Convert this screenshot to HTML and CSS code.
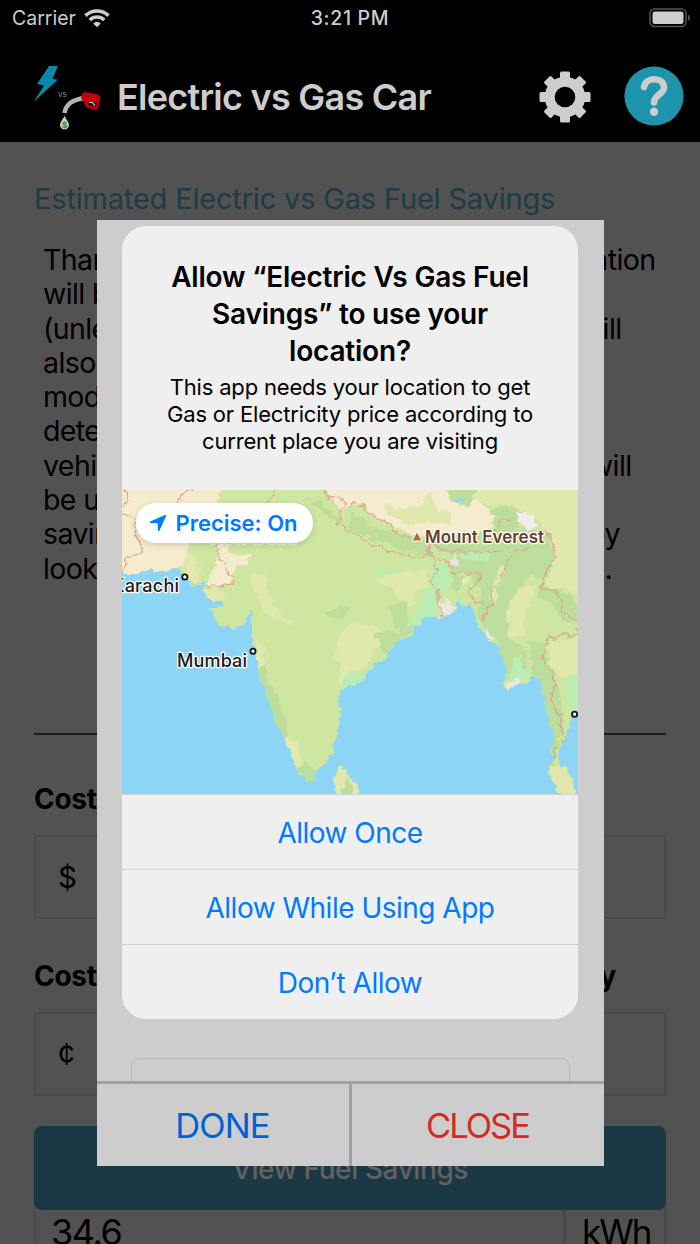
FILE: index.html
```
<!DOCTYPE html>
<html lang="en">
<head>
  <meta charset="utf-8">
  <title>Electric vs Gas Car</title>
  <link rel="stylesheet" href="styles.css">
</head>
<body>
  <div class="screen">
    <header class="header">
      <div class="status">
        <div class="status-left">
          <span class="carrier">Carrier</span>
          <svg class="wifi" width="26" height="19" viewBox="0 0 26 19">
            <path d="M1.500 6.600 A16.500 16.500 0 0 1 24.500 6.600" />
            <path d="M5.700 11 A10.500 10.500 0 0 1 20.300 11" />
            <path class="wifi-dot" d="M9.200 14.400 Q13 11 16.800 14.400 L13 18.200 Z" />
          </svg>
        </div>
        <span class="time">3:21 PM</span>
        <svg class="battery" width="42" height="20" viewBox="0 0 42 20">
          <rect class="battery-case" x="1" y="1" width="36" height="17.5" rx="4.5" />
          <rect class="battery-level" x="3.5" y="3.5" width="31" height="12.5" rx="2.5" />
          <path class="battery-tip" d="M39 6.5 Q41 7.5 41 9.8 Q41 12 39 13 Z" />
        </svg>
      </div>
      <div class="nav">
        <svg class="logo" width="70" height="68" viewBox="32 64 70 68">
          <path fill="#0a87ab" d="M49 66 L58 66 L52.5 79 L58 79.5 L33.500 102 L44 85.500 L37 84 Z" />
          <text class="logo-vs" x="58" y="97">vs</text>
          <path fill="none" stroke="#b4b4b4" stroke-width="4.500" d="M64.500 113 C66 104 72 100.500 83 98" />
          <path fill="#c60006" d="M83 92.500 Q87 91.500 99 95 Q100.500 96 100 99 L98.500 108 Q97 110 94 109.500 L86 107 Q84.500 102 81 98 Z" />
          <path fill="#111" d="M89 100.500 L97 103 L96 107 L88 105 Z" />
          <path fill="none" stroke="#c8c8c8" stroke-width="1.200" d="M89 102.500 L92 102.200 L95 105.500" />
          <path fill="#bfc9bd" d="M64.500 115.500 C65.500 119 69 121.500 69 125 A4.500 4.500 0 0 1 60 125 C60 121.500 63.500 119 64.500 115.500 Z" />
          <text class="logo-dollar" x="64.500" y="127.500">$</text>
        </svg>
        <h1 class="nav-title">Electric vs Gas Car</h1>
        <svg class="gear" width="52" height="52" viewBox="-26 -26 52 52">
          <g fill="#cdcdcd">
            <circle r="20.3" />
            <rect x="-5" y="-25.500" width="10" height="51" rx="1.500" />
            <rect x="-5" y="-25.500" width="10" height="51" rx="1.500" transform="rotate(45)" />
            <rect x="-5" y="-25.500" width="10" height="51" rx="1.500" transform="rotate(90)" />
            <rect x="-5" y="-25.500" width="10" height="51" rx="1.500" transform="rotate(135)" />
          </g>
          <circle r="10.3" fill="#000" />
        </svg>
        <svg class="help" width="60" height="60" viewBox="-30 -30 60 60">
          <circle r="29.600" fill="#1e93ac" />
          <path fill="none" stroke="#cdcdcd" stroke-width="6.500" stroke-linecap="round" d="M-10 -9 C-8.500 -19.500 10 -19.500 10 -8.500 C10 -2 0 -1 0 6.500" />
          <circle cx="0" cy="15.800" r="4.200" fill="#cdcdcd" />
        </svg>
      </div>
    </header>

    <main class="main">
      <h2 class="heading">Estimated Electric vs Gas Fuel Savings</h2>
      <div class="intro">
        <div class="line end-655"><span>Thank</span><span>location</span></div>
        <div class="line"><span>will be</span></div>
        <div class="line end-621"><span>(unless</span><span>will</span></div>
        <div class="line"><span>also</span></div>
        <div class="line"><span>model</span></div>
        <div class="line"><span>deter</span></div>
        <div class="line end-631"><span>vehicle</span><span>will</span></div>
        <div class="line"><span>be used</span></div>
        <div class="line end-620"><span>savings</span><span>by</span></div>
        <div class="line end-611"><span>look</span><span>.</span></div>
      </div>
      <hr class="rule">
      <div class="label">Cost of Gas</div>
      <div class="box">$</div>
      <div class="label label-split"><span>Cost of</span><span>Electricity</span></div>
      <div class="box">¢</div>
      <div class="view-button">View Fuel Savings</div>
      <div class="battery-row">
        <div class="battery-value">34.6</div>
        <div class="battery-unit">kWh</div>
      </div>
    </main>

    <div class="modal">
      <div class="alert">
        <div class="alert-text">
          <div class="alert-title">Allow “Electric Vs Gas Fuel<br>Savings” to use your<br>location?</div>
          <div class="alert-message">This app needs your location to get<br>Gas or Electricity price according to<br>current place you are visiting</div>
        </div>
        <div class="map">
          <svg class="map-art" width="456" height="304" viewBox="122 490 456 304">
            <defs>
              <filter id="rough" filterUnits="userSpaceOnUse" x="112" y="480" width="476" height="324">
                <feTurbulence type="fractalNoise" baseFrequency="0.13" numOctaves="3" seed="4" />
                <feDisplacementMap in="SourceGraphic" scale="9" xChannelSelector="R" yChannelSelector="G" />
              </filter>
            </defs>
            <rect x="122" y="490" width="456" height="304" fill="#8cd5f6" />
            <g filter="url(#rough)">
              <path fill="#cfe6a1" d="M112 480 H588 V714 L570 716 L569 728 L564 740 L558 757 L560 766 L565 767 L570 771 L573 783 L580 804 H568 L563 792 L556 782 L549 774 L552 755 L554 738 L553 724 L546 710 L544 696 L541 681 L533 673 L527 682 L518 686 L509 690 L503 684 L506 670 L504 658 L497 645 L487 636 L479 628 L475 616 L470 606 L462 603 L459 598 L456 612 L450 614 L440 618 L433 616 L422 619 L416 624 L410 636 L397 641 L384 659 L375 666 L364 675 L362 682 L350 686 L342 690 L338 700 L340 722 L334 740 L335 755 L328 756 L325 766 L315 771 L314 778 L307 781 L302 777 L295 768 L291 752 L284 737 L276 724 L272 710 L265 692 L259 678 L257 660 L252 640 L252 624 L251 611 L249 610 L246 622 L240 627 L230 629 L222 626 L214 618 L209 609 L216 608 L224 604 L222 601 L215 602 L206 596 L203 590 L204 583 L196 586 L190 584 L185 574 L178 568 L162 571 L152 569 L150 571 L128 573 L112 576 Z" />
              <!-- dry plains and the plateau -->
              <path fill="#f5ecd0" d="M112 480 H224 L216 505 L200 520 L188 540 L186 560 L178 568 L162 571 L152 569 L150 571 L128 573 L112 576 Z" />
              <path fill="#f5ecd0" d="M214 543 L226 545 L230 552 L243 556 L250 556 L248 562 L238 566 L233 572 L232 583 L220 586 L205 585 L214 570 L218 556 Z" />
              <path fill="#f5ecd0" d="M318 480 H450 L480 502 L494 512 L492 530 L476 532 L430 536 L410 534 L384 523 L366 508 L352 504 L344 510 L334 503 Z" />
              <!-- scrub -->
              <path fill="#e0e8ad" d="M450 480 H588 V608 L566 588 L552 590 L544 584 L552 570 L553 545 L545 530 L540 520 L525 514 L515 507 L490 505 L475 500 L462 506 Z" />
              <path fill="#e0e8ad" d="M384 506 L400 508 L420 506 L430 492 L436 500 L436 508 L450 514 L449 524 L426 523 L412 526 L400 520 L388 516 Z" />
              <path fill="#e0e8ad" d="M183 568 L189 548 L192 555 L201 566 L198 584 L192 584 Z M203 590 L216 587 L226 596 L230 599 L220 600 L215 602 L206 596 Z M252 574 L265 572 L268 590 L274 606 L282 618 L296 620 L290 624 L274 618 L263 612 L258 596 L251 582 Z" />
              <path fill="#e0e8ad" d="M255 642 L266 646 L263 656 L268 668 L262 672 L258 670 Z M340 632 L352 622 L372 626 L384 640 L374 652 L364 668 L350 672 L340 688 L340 668 L334 654 Z M378 570 L400 572 L426 570 L428 584 L416 592 L414 604 L402 610 L396 588 L380 584 Z M350 628 L380 626 L384 636 L366 640 Z M284 737 L297 740 L302 762 L295 768 L291 752 Z" />
              <!-- forest -->
              <path fill="#bcdd9c" d="M306 498 L320 502 L346 524 L346 526 L330 518 Z M350 512 L366 520 L372 528 L400 534 L430 540 L432 556 L408 552 L386 544 L360 534 L348 530 Z M326 612 L342 606 L350 608 L344 618 L328 618 Z" />
              <path fill="#bcdd9c" d="M432 536 L490 530 L505 525 L536 532 L548 532 L553 550 L552 568 L544 582 L530 574 L520 590 L510 600 L506 616 L510 650 L500 644 L484 630 L476 610 L480 590 L468 574 L452 572 L450 552 L436 552 Z" />
              <path fill="#bcdd9c" d="M492 512 L504 505 L524 512 L522 524 L508 528 L494 526 Z M450 572 L466 578 L460 590 L453 590 Z" />
              <path fill="#bcdd9c" d="M258 670 L264 664 L268 682 L278 696 L280 712 L288 718 L288 736 L284 737 L276 724 L272 710 L265 692 L259 678 Z M300 766 L306 762 L315 771 L314 778 L307 781 L296 768 Z" />
              <path fill="#bcdd9c" d="M374 634 L392 632 L406 634 L396 642 L384 656 L380 646 Z M388 606 L402 600 L408 604 L406 622 L416 624 L408 636 L396 628 Z M540 586 L566 592 L588 616 V628 L562 620 L552 602 L538 600 Z" />
              <path fill="#bcdd9c" d="M497 645 L514 640 L528 650 L524 680 L508 686 L506 670 Z M528 640 L544 642 L550 668 L560 690 L562 712 L564 728 L556 752 L554 770 L551 770 L554 738 L546 710 L544 696 L541 681 L532 672 Z" />
              <path fill="#e0e8ad" d="M500 566 L506 568 L498 590 L494 606 L489 600 L494 580 Z M513 600 L520 590 L536 584 L532 602 L524 616 L526 636 L510 636 L506 616 Z M548 642 L588 636 V672 L562 678 L550 662 Z M552 764 L566 768 L572 784 L580 804 H568 L550 778 Z" />
              <!-- river deltas -->
              <path fill="#b9edb4" d="M432 566 L448 562 L450 586 L446 594 L436 584 L430 578 Z M426 586 L438 584 L440 606 L436 616 L424 618 L416 626 L406 628 L420 608 Z M372 572 L396 568 L398 572 L380 578 Z M458 554 L476 551 L490 554 L488 562 L460 558 Z" />
              <path fill="#b9edb4" d="M350 674 L362 672 L364 678 L354 686 L342 688 L344 678 Z M514 656 L520 654 L522 668 L530 668 L524 680 L510 684 L508 678 Z M566 676 L588 672 V716 L570 716 L568 690 Z" />
              <path fill="#eee6dc" d="M454 554 L460 562 L450 564 Z M440 604 L446 598 L456 610 L450 614 L440 616 Z M506 684 L516 678 L522 682 L509 690 Z M464 580 L469 576 L464 588 Z M483 626 L494 638 L490 640 Z" />
              <path fill="#f3eeee" d="M516 512 L534 516 L537 528 L526 530 L518 520 Z" />
              <path fill="#bcdd9c" d="M446 488 H480 L472 496 L470 508 L452 500 Z" />
              <path fill="#8cd5f6" d="M455 500 L465 497 L462 501 L456 502 Z" />
              <!-- Sri Lanka -->
              <path fill="#e0e8ad" d="M335 804 L334 778 L338 766 L343 765 L350 775 L356 782 L359 804 Z" />
              <path fill="#bcdd9c" d="M337 804 L346 782 L349 776 L352 784 L350 804 Z" />
              <!-- country borders -->
              <g class="borders">
                <path d="M124 488 L127 500 L122 506 L122 514 L134 517 L136 534 L142 548 L140 554 L128 556 L124 568 L122 574" />
                <path d="M194 488 L180 496 L176 508" />
                <path d="M275 488 L270 500 L262 510 M218 540 L216 550 L222 560 L226 568 L232 576 L232 584 L218 586 L206 586" />
                <path d="M321 488 L330 498 L338 497 L345 504 L340 516 L338 524 L346 530 L362 538 L376 545 L390 551 L408 556 L430 556 L430 542" />
                <path d="M350 508 L354 503 L364 508 L376 518 L384 520 L392 529 L404 535 L412 538 M430 542 L440 548 L452 552 L480 552 L500 550" />
                <path d="M430 556 L442 560 L450 562 L452 572 L470 574 L482 574 L478 582 L468 590 L474 600 L482 602 L484 622 L488 610 L492 604 L492 590 L500 580 L506 564 L514 552 L530 548" />
                <path d="M432 560 L438 570 L430 580 L438 590 L438 600 L442 616" />
                <path d="M494 530 L502 520 L512 519 M538 528 L548 534 L554 544 L554 560 L546 572 L542 588 L554 590 L562 600 L562 612 L578 620" />
                <path d="M578 630 L570 638 L560 634 L546 642 L542 658 L552 672 L556 684 L550 698 L560 714 L560 724 L565 738 L556 750 L552 762" />
              </g>
            </g>
            <circle class="city-dot" cx="184.800" cy="577" r="2.600" />
            <circle class="city-dot" cx="253" cy="651.300" r="2.600" />
            <circle class="city-dot" cx="574.600" cy="714.300" r="2.600" />
            <path fill="#b86a3c" stroke="#fff" stroke-width="1" d="M417 531.500 L422 541 H412 Z" />
            <text class="city faint" x="210" y="544">New Delhi</text>
            <text class="city" x="112" y="592" textLength="67">Karachi</text>
            <text class="city" x="177" y="666.500" textLength="70">Mumbai</text>
            <text class="peak" x="425" y="542.500" textLength="119">Mount Everest</text>
          </svg>
          <div class="precise">
            <svg width="18" height="18" viewBox="0 0 18 18">
              <path fill="#007aff" d="M16 1 Q17.600 0.500 17 2.200 L10.500 16.600 Q9.300 18 8.900 16.300 L8.800 9.700 Q8.800 9.200 8.300 9.200 L1.500 9.100 Q0 8.600 1.300 7.500 Z" />
            </svg>
            <span>Precise: On</span>
          </div>
        </div>
        <div class="alert-action">Allow Once</div>
        <div class="alert-action">Allow While Using App</div>
        <div class="alert-action">Don’t Allow</div>
      </div>
      <div class="modal-field"></div>
      <div class="modal-footer">
        <div class="done">DONE</div>
        <div class="close">CLOSE</div>
      </div>
    </div>
  </div>
</body>
</html>
```

FILE: styles.css
```
* {
  box-sizing: border-box;
}

body {
  margin: 0;
  font-family: Inter, "Liberation Sans", sans-serif;
  background-color: #525252;
}

.screen {
  position: relative;
  width: 700px;
  height: 1244px;
  overflow: hidden;
  color: #000;
}

.header {
  height: 142px;
  background-color: #000;
  color: #cdcdcd;
}

.status {
  display: grid;
  grid-template-columns: 1fr auto 1fr;
  align-items: center;
  height: 36px;
  padding: 0 9px 0 12px;
  font-size: 19.5px;
}

.status-left {
  display: flex;
  align-items: center;
  gap: 8px;
}

.wifi {
  fill: none;
  stroke: #cdcdcd;
  stroke-width: 3.6;
}

.wifi-dot {
  fill: #cdcdcd;
  stroke: none;
}

.time {
  margin-right: 3px;
  font-weight: 500;
  letter-spacing: 0.7px;
}

.battery {
  justify-self: end;
}

.battery-case {
  fill: none;
  stroke: #555;
  stroke-width: 1.5;
}

.battery-level {
  fill: #cdcdcd;
}

.battery-tip {
  fill: #555;
}

.nav {
  display: flex;
  align-items: center;
  height: 106px;
  padding: 0 16.5px 0 32px;
}

.logo {
  margin-top: 18px;
}

.logo-vs {
  font-size: 8px;
  fill: #8a8a8a;
}

.logo-dollar {
  font-size: 8px;
  font-weight: 700;
  fill: #2f8a3a;
  text-anchor: middle;
}

.nav-title {
  flex: 1;
  margin: 16px 0 0 15px;
  font-size: 36px;
  font-weight: 600;
  letter-spacing: -0.75px;
  white-space: nowrap;
}

.gear {
  margin: 15px 33px 0 0;
}

.help {
  margin-top: 13px;
}

.main {
  padding: 37px 34px 0;
}

.heading {
  margin: 0;
  font-size: 29px;
  font-weight: 400;
  line-height: 40px;
  letter-spacing: -0.18px;
  color: #1c3c47;
  white-space: nowrap;
}

.intro {
  margin: 24px 0 0 9px;
  font-size: 28.5px;
  line-height: 34.3px;
  letter-spacing: -0.6px;
}

.line {
  display: flex;
  justify-content: space-between;
  height: 34.3px;
}

.end-655 {
  width: 612.5px;
}

.end-621 {
  width: 578.5px;
}

.end-631 {
  width: 588.5px;
}

.end-620 {
  width: 577px;
}

.end-611 {
  width: 569px;
}

.rule {
  height: 2px;
  margin: 147px 0 0;
  border: none;
  background-color: #1c1c1c;
}

.label {
  margin-top: 44px;
  font-size: 28px;
  font-weight: 700;
  line-height: 40px;
  letter-spacing: -0.3px;
}

.label-split {
  display: flex;
  justify-content: space-between;
  width: 582px;
  margin-top: 37px;
}

.box {
  height: 84px;
  margin-top: 16px;
  padding-left: 22px;
  border: 2px solid #4a4a4a;
  font-size: 29.5px;
  line-height: 81px;
}

.view-button {
  position: relative;
  height: 84px;
  margin-top: 30px;
  border-radius: 8px;
  background-color: #1b3944;
  color: #626262;
  font-size: 28px;
  font-weight: 500;
  line-height: 86px;
  letter-spacing: -0.4px;
  text-align: center;
}

.battery-row {
  display: flex;
  height: 48px;
  margin-top: -10px;
  border: solid #4a4a4a;
  border-width: 0 2px;
  font-size: 36px;
  line-height: 65px;
}

.battery-value {
  flex: 1;
  padding-left: 15px;
  letter-spacing: -1.4px;
}

.battery-unit {
  width: 101px;
  padding-left: 16px;
  border-left: 3px solid #4a4a4a;
  font-size: 35px;
  letter-spacing: -2px;
}

.modal {
  position: absolute;
  top: 220px;
  left: 96.5px;
  display: flex;
  flex-direction: column;
  width: 507px;
  height: 946px;
  padding-top: 6px;
  background-color: #cdcdcd;
}

.alert {
  width: 456px;
  height: 793px;
  margin: 0 auto;
  overflow: hidden;
  border-radius: 24px;
  background-color: #efefef;
}

.alert-text {
  height: 264px;
  padding-top: 33px;
  text-align: center;
  white-space: nowrap;
}

.alert-title {
  font-size: 28px;
  font-weight: 600;
  line-height: 37px;
  letter-spacing: -0.2px;
}

.alert-message {
  margin-top: 4px;
  font-size: 22px;
  line-height: 27px;
  letter-spacing: -0.18px;
}

.map {
  position: relative;
  height: 304px;
}

.map-art {
  display: block;
}

.borders {
  fill: none;
  stroke: #dfa088;
  stroke-width: 1.2;
  stroke-linejoin: round;
}

.city-dot {
  fill: #fff;
  stroke: #111;
  stroke-width: 1.8;
}

.city,
.peak {
  font-size: 18px;
  font-weight: 500;
  fill: #1b1b1b;
  stroke: #fff;
  stroke-width: 2.5px;
  stroke-linejoin: round;
  paint-order: stroke;
}

.peak {
  font-size: 17px;
  font-weight: 600;
  fill: #65401f;
}

.faint {
  fill: #c9cdb8;
  opacity: 0.5;
}

.precise {
  position: absolute;
  top: 13px;
  left: 13.5px;
  display: flex;
  align-items: center;
  gap: 9px;
  width: 177px;
  height: 40px;
  padding-left: 13px;
  border-radius: 20px;
  background-color: #fff;
  box-shadow: 0 2px 6px rgba(0, 0, 0, 0.15);
  color: #007aff;
  font-size: 22px;
  font-weight: 600;
}

.alert-action {
  height: 75px;
  border-top: 1.5px solid #d2d2d2;
  color: #007aff;
  font-size: 28px;
  line-height: 76px;
  letter-spacing: -0.5px;
  text-align: center;
}

.modal-field {
  height: 23px;
  margin: 39px 33.5px 0 34px;
  border: 1px solid #b5b5b5;
  border-bottom: none;
  border-radius: 9px 9px 0 0;
}

.modal-footer {
  display: flex;
  height: 85px;
  margin-top: auto;
  border-top: 3px solid #a1a1a4;
  font-size: 34.5px;
  line-height: 83px;
  text-align: center;
}

.done,
.close {
  flex: 1;
}

.done {
  border-right: 3px solid #a1a1a4;
  color: #0062d1;
  letter-spacing: -0.9px;
}

.close {
  color: #d02c24;
  letter-spacing: -2px;
}
```
